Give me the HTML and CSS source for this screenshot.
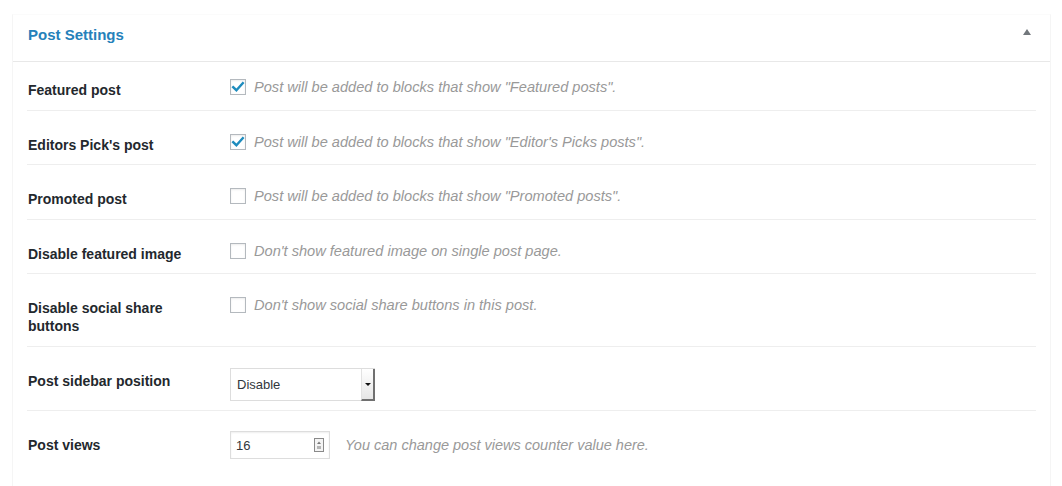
FILE: index.html
```html
<!DOCTYPE html>
<html>
<head>
<meta charset="utf-8">
<link rel="stylesheet" href="styles.css">
</head>
<body>
<div class="panel">
  <div class="panel-head">
    <h2 class="panel-title">Post Settings</h2>
    <span class="toggle"></span>
  </div>
  <div class="panel-body">
    <div class="row row-first">
      <div class="label">Featured post</div>
      <div class="field">
        <span class="cb"><svg viewBox="0 0 16 16" width="16" height="16"><path d="M3.2 8.2 L6.4 11.2 L12.8 4.2" fill="none" stroke="#1e8cbe" stroke-width="2.4" stroke-linecap="square"/></svg></span>
        <span class="desc">Post will be added to blocks that show "Featured posts".</span>
      </div>
    </div>
    <div class="row">
      <div class="label">Editors Pick's post</div>
      <div class="field">
        <span class="cb"><svg viewBox="0 0 16 16" width="16" height="16"><path d="M3.2 8.2 L6.4 11.2 L12.8 4.2" fill="none" stroke="#1e8cbe" stroke-width="2.4" stroke-linecap="square"/></svg></span>
        <span class="desc">Post will be added to blocks that show "Editor's Picks posts".</span>
      </div>
    </div>
    <div class="row row-tall">
      <div class="label">Promoted post</div>
      <div class="field">
        <span class="cb"></span>
        <span class="desc">Post will be added to blocks that show "Promoted posts".</span>
      </div>
    </div>
    <div class="row">
      <div class="label">Disable featured image</div>
      <div class="field">
        <span class="cb"></span>
        <span class="desc">Don't show featured image on single post page.</span>
      </div>
    </div>
    <div class="row row-tall">
      <div class="label">Disable social share buttons</div>
      <div class="field">
        <span class="cb"></span>
        <span class="desc">Don't show social share buttons in this post.</span>
      </div>
    </div>
    <div class="row row-select">
      <div class="label">Post sidebar position</div>
      <div class="field">
        <div class="select">
          <span class="select-value">Disable</span>
          <span class="select-btn"><span class="arrow"></span></span>
        </div>
      </div>
    </div>
    <div class="row row-input">
      <div class="label">Post views</div>
      <div class="field">
        <div class="num">
          <span class="num-value">16</span>
          <svg class="spin" viewBox="0 0 10 14" width="10" height="14"><rect x="0.5" y="0.5" width="9" height="13" fill="#f4f4f4" stroke="#8a8a8a"/><path d="M5 3.5 L7 6 L3 6 Z" fill="#777"/><rect x="3" y="8" width="4" height="3" fill="#b5b5b5"/></svg>
        </div>
        <span class="desc desc-num">You can change post views counter value here.</span>
      </div>
    </div>
  </div>
</div>
</body>
</html>
```
FILE: styles.css
```css
html, body {
  margin: 0;
  padding: 0;
  background: #fff;
}
body {
  font-family: "Liberation Sans", Arial, sans-serif;
  font-size: 14px;
  color: #23282d;
}
.panel {
  margin: 14px 11px 0 12px;
  border: 1px solid #f5f5f5;
  border-top-color: #fbfbfb;
  border-bottom: none;
  min-height: 480px;
}
.panel-head {
  height: 46px;
  border-bottom: 1px solid #e8e8e8;
  display: flex;
  align-items: flex-start;
  justify-content: space-between;
  padding: 0 19px 0 15px;
}
.panel-title {
  margin: 11px 0 0 0;
  font-size: 15px;
  line-height: 18px;
  font-weight: bold;
  color: #2581ba;
}
.toggle {
  width: 0;
  height: 0;
  border-left: 4px solid transparent;
  border-right: 4px solid transparent;
  border-bottom: 6px solid #72777c;
  margin-top: 14px;
}
.panel-body {
  padding: 0 14px;
}
.row {
  display: grid;
  grid-template-columns: 203px 1fr;
  border-bottom: 1px solid #eeeeee;
}
.label {
  font-weight: bold;
  line-height: 18px;
  padding: 25px 22px 10px 1px;
}
.field {
  display: flex;
  align-items: center;
  align-self: start;
  padding: 22px 0 13px 0;
}
.row-tall .label { padding-bottom: 11px; }
.row-first .label { padding-top: 19px; padding-bottom: 11px; }
.row-first .field { padding-top: 16px; padding-bottom: 14px; }
.cb {
  width: 14px;
  height: 14px;
  border: 1px solid #b4b9be;
  background: #fff;
  box-shadow: inset 0 1px 2px rgba(0,0,0,0.08);
  position: relative;
  flex: none;
}
.cb svg {
  position: absolute;
  left: -1px;
  top: -1px;
}
.desc {
  font-style: italic;
  font-size: 14.6px;
  color: #999;
  margin-left: 8px;
  line-height: 18px;
}
.row-select .field { padding: 21px 0 9px 0; }
.select {
  width: 145px;
  height: 33px;
  box-sizing: border-box;
  border: 1px solid #dddddd;
  border-right: none;
  display: flex;
  align-items: stretch;
  background: #fff;
}
.select-value {
  flex: 1;
  font-size: 13px;
  color: #32373c;
  padding-left: 6px;
  display: flex;
  align-items: center;
}
.select-btn {
  width: 11px;
  margin-bottom: -1px;
  background: linear-gradient(#ffffff, #e6e6e6);
  border-left: 1px solid #e2e2e2;
  border-right: 2px solid #707070;
  border-bottom: 2px solid #707070;
  display: flex;
  align-items: center;
  justify-content: center;
}
.arrow {
  width: 0;
  height: 0;
  border-left: 3px solid transparent;
  border-right: 3px solid transparent;
  border-top: 3px solid #111;
}
.row-input { border-bottom: none; }
.row-input .field { padding: 20px 0 14px 0; }
.num {
  width: 100px;
  height: 28px;
  box-sizing: border-box;
  border: 1px solid #dddddd;
  box-shadow: inset 0 1px 2px rgba(0,0,0,0.07);
  display: flex;
  align-items: center;
  justify-content: space-between;
  padding: 0 5px 0 5px;
}
.num-value {
  font-size: 13px;
  color: #32373c;
}
.desc-num {
  font-size: 14.5px;
  margin-left: 15px;
}
```
